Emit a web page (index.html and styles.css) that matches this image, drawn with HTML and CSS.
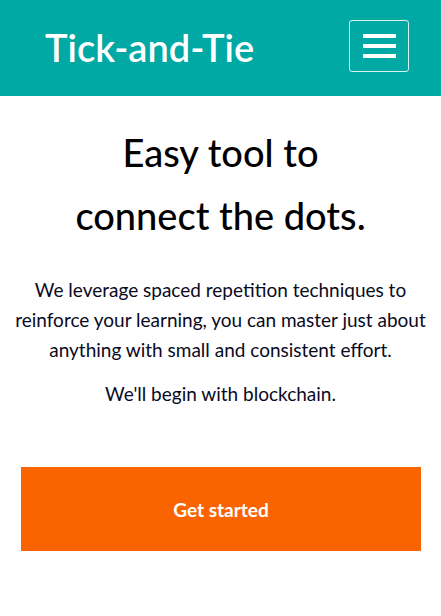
FILE: index.html
```html
<!DOCTYPE html>
<html lang="en">
<head>
<meta charset="utf-8">
<title>Tick-and-Tie</title>
<link rel="stylesheet" href="styles.css">
</head>
<body>
<header class="topbar">
  <a class="brand" href="#">Tick-and-Tie</a>
  <button class="menu-btn" type="button" aria-label="Menu">
    <span class="bar"></span><span class="bar"></span><span class="bar"></span>
  </button>
</header>
<main class="hero">
  <h1 class="hero-title">Easy tool to<br>connect the dots.</h1>
  <p class="hero-text">We leverage spaced repetition techniques to reinforce your learning, you can master just about anything with small and consistent effort.</p>
  <p class="hero-text">We'll begin with blockchain.</p>
  <a class="cta" href="#">Get started</a>
</main>
</body>
</html>
```
FILE: styles.css
```css
* { box-sizing: border-box; }
html, body { margin: 0; padding: 0; background: #fff; }
body { font-family: Lato, "Noto Sans", sans-serif; color: #0a0a23; }
.topbar {
  height: 96px;
  background: #00a9a4;
  display: flex;
  align-items: center;
  justify-content: space-between;
  padding: 0 32px 0 45px;
}
.brand {
  color: #fff;
  text-decoration: none;
  font-size: 38px;
  line-height: 1;
  font-weight: 600;
  margin-bottom: 2px;
}
.menu-btn {
  width: 60px;
  height: 52px;
  margin-bottom: 5px;
  border: 1px solid rgba(255,255,255,0.85);
  border-radius: 3px;
  background: transparent;
  display: flex;
  flex-direction: column;
  align-items: center;
  justify-content: center;
  gap: 6px;
  padding: 0;
}
.bar { display: block; width: 33px; height: 4px; background: #fff; }
.hero { display: flex; flex-direction: column; align-items: center; padding: 25px 0 0; }
.hero-title {
  margin: 0 0 28px;
  font-size: 38px;
  line-height: 63px;
  font-weight: 500;
  text-align: center;
  color: #000;
}
.hero-text {
  margin: 0 0 14px;
  padding: 0 10px;
  font-size: 19px;
  line-height: 30px;
  text-align: center;
}
.cta {
  align-self: stretch;
  margin: 44px 20px 0 21px;
  height: 84px;
  background: #f96400;
  color: #fff;
  font-weight: 700;
  font-size: 19px;
  text-decoration: none;
  display: flex;
  align-items: center;
  justify-content: center;
}
```
